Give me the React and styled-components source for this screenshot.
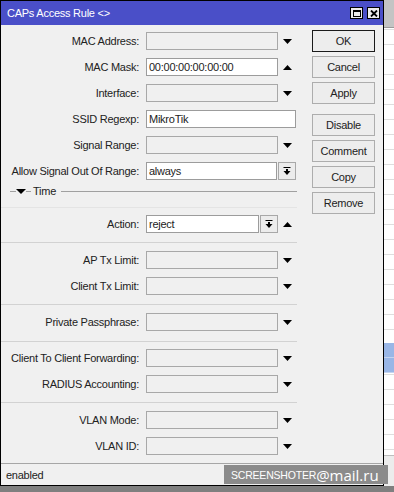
import React from "react";
import styled, { createGlobalStyle } from "styled-components";

const GlobalStyle = createGlobalStyle`
  html, body {
    margin: 0;
    padding: 0;
    background: #7f7f7f;
    overflow: hidden;
  }
  body {
    font-family: "Liberation Sans", Arial, sans-serif;
    font-size: 11px;
    letter-spacing: -0.25px;
    color: #222;
  }
`;

const Screen = styled.div`
  position: relative;
  width: 394px;
  height: 492px;
  display: flex;
  flex-direction: column;
  background: #7f7f7f;
`;

const Main = styled.div`
  display: flex;
  height: 486px;
`;

const Window = styled.div`
  box-sizing: border-box;
  width: 384px;
  height: 486px;
  border: 1px solid #000;
  display: flex;
  flex-direction: column;
  background: #f0f0f0;
`;

const TitleBar = styled.div`
  height: 24px;
  flex: none;
  background: #4a4fc8;
  display: flex;
  align-items: center;
  justify-content: space-between;
  padding: 0 3px 0 6px;
`;

const TitleText = styled.span`
  color: #fff;
  font-size: 11px;
`;

const TitleButtons = styled.div`
  display: flex;
  gap: 4px;
`;

const TitleButton = styled.div`
  box-sizing: border-box;
  width: 13px;
  height: 12px;
  border: 1px solid #000;
  background: #ececec;
  display: flex;
  align-items: center;
  justify-content: center;
`;

const Body = styled.div`
  flex: 1;
  display: flex;
`;

const Form = styled.div`
  width: 296px;
  display: flex;
  flex-direction: column;
  padding-top: 3px;
`;

const Section = styled.div`
  display: flex;
  flex-direction: column;
  padding-top: ${p => p.$pt || 0}px;
  padding-bottom: ${p => p.$pb || 0}px;
`;

const Row = styled.div`
  height: 26px;
  display: flex;
  align-items: center;
`;

const Label = styled.div`
  width: 138px;
  margin-right: 7px;
  text-align: right;
  white-space: nowrap;
`;

const Field = styled.div`
  box-sizing: border-box;
  width: ${p => p.$w || 132}px;
  height: 18px;
  border: 1px solid ${p => (p.$on ? "#9c9c9c" : "#a8a8a8")};
  background: ${p => (p.$on ? "#fff" : "#f0f0f0")};
  padding: 0 2px;
  line-height: 16px;
  white-space: nowrap;
  overflow: hidden;
`;

const ComboButton = styled.div`
  box-sizing: border-box;
  width: 18px;
  height: 18px;
  margin-left: 1px;
  border: 1px solid #a8a8a8;
  background: #ececec;
  display: flex;
  align-items: center;
  justify-content: center;
`;

const ArrowCell = styled.div`
  width: 18px;
  display: flex;
  justify-content: center;
`;

const Separator = styled.div`
  height: 1px;
  background: ${p => (p.$faint ? "#e4e4e4" : "#d2d2d2")};
`;

const GroupHeader = styled.div`
  height: 14px;
  display: flex;
  align-items: center;
  padding-left: 9px;
  margin-bottom: 9px;
`;

const GroupLine = styled.div`
  height: 1px;
  background: #a0a0a0;
  width: ${p => (p.$w ? `${p.$w}px` : "auto")};
  flex: ${p => (p.$w ? "none" : 1)};
`;

const GroupTitle = styled.span`
  margin: 0 5px 0 2px;
`;

const ButtonColumn = styled.div`
  display: flex;
  flex-direction: column;
  gap: 4px;
  margin-left: 15px;
  padding-top: 5px;
`;

const Button = styled.div`
  box-sizing: border-box;
  width: 63px;
  height: 22px;
  margin-top: ${p => (p.$gap ? 6 : 0)}px;
  border: 1px solid ${p => (p.$default ? "#1a1a1a" : "#adadad")};
  background: #ededed;
  display: flex;
  align-items: center;
  justify-content: center;
`;

const StatusBar = styled.div`
  height: 21px;
  flex: none;
  border-top: 1px solid #a6a6a6;
  display: flex;
  align-items: center;
  padding-left: 5px;
`;

const Backdrop = styled.div`
  flex: 1;
  display: flex;
  flex-direction: column;
`;

const BackdropHeader = styled.div`
  height: 27px;
  background: #c4c4c4;
  border-bottom: 1px solid #9a9a9a;
`;

const BackdropTable = styled.div`
  flex: 1;
  padding-top: 315px;
  background: repeating-linear-gradient(
    to bottom,
    #fff 0 1px,
    #dedede 1px 2px,
    #fff 2px 15px
  );
`;

const BlueRow = styled.div`
  height: 14px;
  background: #99b6e6;
  border-bottom: 1px solid #c4d4ef;
`;

const BackdropStatus = styled.div`
  height: 30px;
  background: #ececec;
  border-top: 1px solid #bdbdbd;
`;

const BottomStrip = styled.div`
  flex: 1;
  background: #7f7f7f;
`;

const Watermark = styled.div`
  position: absolute;
  left: 224px;
  top: 465px;
  width: 164px;
  height: 19px;
  background: #8b8b8b;
  color: #fff;
  display: flex;
  align-items: center;
  padding-left: 7px;
  box-sizing: border-box;
  white-space: nowrap;
`;

const MarkCaps = styled.span`
  font-size: 10.5px;
  letter-spacing: -0.2px;
`;

const MarkMail = styled.span`
  font-family: "Open Sans", sans-serif;
  font-size: 15px;
  letter-spacing: 0;
  line-height: 16px;
`;

const DownArrow = () => (
  <svg width="9" height="5" viewBox="0 0 9 5">
    <polygon points="0,0 9,0 4.5,5" fill="#000" />
  </svg>
);

const UpArrow = () => (
  <svg width="9" height="5" viewBox="0 0 9 5">
    <polygon points="0,5 9,5 4.5,0" fill="#000" />
  </svg>
);

const DownToBar = () => (
  <svg width="8" height="8" viewBox="0 0 8 8">
    <rect x="0.5" y="0" width="7" height="1" fill="#000" />
    <rect x="3" y="2" width="2" height="2" fill="#000" />
    <polygon points="0.5,4 7.5,4 4,8" fill="#000" />
  </svg>
);

const Dropdown = ({ label, value, up }) => (
  <Row>
    <Label>{label}</Label>
    <Field $on={!!value}>{value}</Field>
    <ArrowCell>{up ? <UpArrow /> : <DownArrow />}</ArrowCell>
  </Row>
);

export default function App() {
  return (
    <>
      <GlobalStyle />
      <Screen>
        <Main>
          <Window>
            <TitleBar>
              <TitleText>CAPs Access Rule &lt;&gt;</TitleText>
              <TitleButtons>
                <TitleButton>
                  <svg width="8" height="7" viewBox="0 0 8 7">
                    <rect x="0.5" y="0.5" width="7" height="6" fill="none" stroke="#000" />
                    <rect x="0" y="0" width="8" height="2" fill="#000" />
                  </svg>
                </TitleButton>
                <TitleButton>
                  <svg width="8" height="7" viewBox="0 0 8 7">
                    <path d="M1 0.5 L7 6.5 M7 0.5 L1 6.5" stroke="#000" strokeWidth="1.8" />
                  </svg>
                </TitleButton>
              </TitleButtons>
            </TitleBar>
            <Body>
              <Form>
                <Section>
                  <Dropdown label="MAC Address:" />
                  <Dropdown label="MAC Mask:" value="00:00:00:00:00:00" up />
                  <Dropdown label="Interface:" />
                  <Row>
                    <Label>SSID Regexp:</Label>
                    <Field $on $w={150}>MikroTik</Field>
                  </Row>
                  <Dropdown label="Signal Range:" />
                  <Row>
                    <Label>Allow Signal Out Of Range:</Label>
                    <Field $on $w={131}>always</Field>
                    <ComboButton>
                      <DownToBar />
                    </ComboButton>
                  </Row>
                </Section>
                <GroupHeader>
                  <GroupLine $w={6} />
                  <svg width="10" height="5" viewBox="0 0 10 5">
                    <polygon points="0,0 10,0 5,5" fill="#000" />
                  </svg>
                  <GroupLine $w={5} />
                  <GroupTitle>Time</GroupTitle>
                  <GroupLine />
                </GroupHeader>
                <Separator $faint />
                <Section $pt={3} $pb={5}>
                  <Row>
                    <Label>Action:</Label>
                    <Field $on $w={113}>reject</Field>
                    <ComboButton>
                      <DownToBar />
                    </ComboButton>
                    <ArrowCell>
                      <UpArrow />
                    </ArrowCell>
                  </Row>
                </Section>
                <Separator />
                <Section $pt={4} $pb={5}>
                  <Dropdown label="AP Tx Limit:" />
                  <Dropdown label="Client Tx Limit:" />
                </Section>
                <Separator />
                <Section $pt={4} $pb={6}>
                  <Dropdown label="Private Passphrase:" />
                </Section>
                <Separator />
                <Section $pt={3} $pb={5}>
                  <Dropdown label="Client To Client Forwarding:" />
                  <Dropdown label="RADIUS Accounting:" />
                </Section>
                <Separator />
                <Section $pt={4} $pb={4}>
                  <Dropdown label="VLAN Mode:" />
                  <Dropdown label="VLAN ID:" />
                </Section>
              </Form>
              <ButtonColumn>
                <Button $default>OK</Button>
                <Button>Cancel</Button>
                <Button>Apply</Button>
                <Button $gap>Disable</Button>
                <Button>Comment</Button>
                <Button>Copy</Button>
                <Button>Remove</Button>
              </ButtonColumn>
            </Body>
            <StatusBar>enabled</StatusBar>
          </Window>
          <Backdrop>
            <BackdropHeader />
            <BackdropTable>
              <BlueRow />
              <BlueRow />
            </BackdropTable>
            <BackdropStatus />
          </Backdrop>
        </Main>
        <BottomStrip />
        <Watermark>
          <MarkCaps>SCREENSHOTER</MarkCaps>
          <MarkMail>@mail.ru</MarkMail>
        </Watermark>
      </Screen>
    </>
  );
}
